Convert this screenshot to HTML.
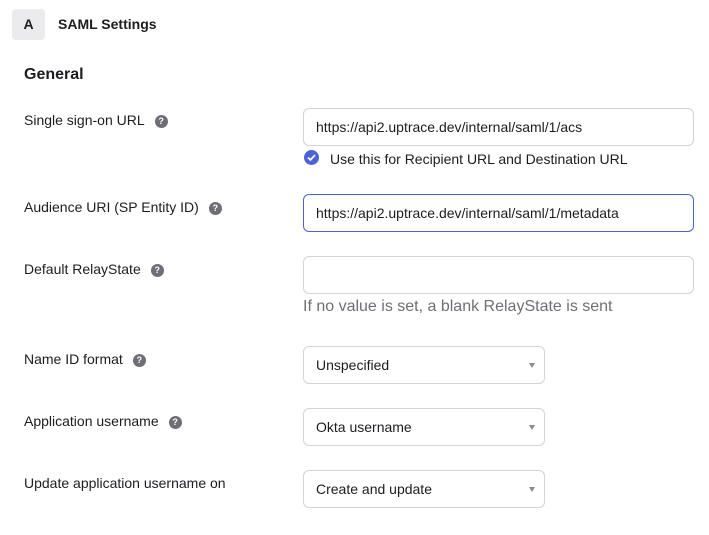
<!DOCTYPE html>
<html><head><style>
body{margin:0;width:709px;height:535px;background:#fff;font-family:"Liberation Sans",sans-serif;color:#1d1d21;position:relative;overflow:hidden}
.a{position:absolute}
.box{position:absolute;left:12px;top:9px;width:33px;height:31px;background:#ebebed;border-radius:4px;font-weight:bold;font-size:14px;text-align:center;line-height:31px}
.lbl{position:absolute;left:24px;font-size:14px;color:#1d1d21}
.q{display:inline-block;width:13px;height:13px;border-radius:50%;background:#6e6e78;color:#fff;font-size:9px;font-weight:bold;text-align:center;line-height:13px;margin-left:10px;vertical-align:1px}
.in{position:absolute;left:303px;height:36px;border:1px solid #d4d4d8;border-radius:6px;font-size:14px;line-height:36px;padding-left:12px;width:377px;color:#1d1d21}
.sel{position:absolute;left:303px;width:228px;height:36px;border:1px solid #d4d4d8;border-radius:6px;font-size:14px;line-height:36px;padding-left:12px}
.sel:after{content:"";position:absolute;right:9px;top:16px;border:3.5px solid transparent;border-top:5px solid #8a8a92}
</style></head><body>
<div class="box">A</div>
<div class="a" style="left:58px;top:16px;font-size:14px;font-weight:bold">SAML Settings</div>
<div class="a" style="left:24px;top:66px;font-size:16px;font-weight:bold">General</div>

<div class="lbl" style="top:112px">Single sign-on URL<span class="q">?</span></div>
<div class="in" style="top:108px">https://api2.uptrace.dev/internal/saml/1/acs</div>
<div class="a" style="left:304px;top:150px;width:15px;height:15px;border-radius:50%;background:#4d62d6"><svg width="15" height="15" viewBox="0 0 15 15"><path d="M4 7.6l2.4 2.3 4.6-4.8" stroke="#fff" stroke-width="1.8" fill="none"/></svg></div>
<div class="a" style="left:330px;top:151px;font-size:14px">Use this for Recipient URL and Destination URL</div>

<div class="lbl" style="top:199px">Audience URI (SP Entity ID)<span class="q">?</span></div>
<div class="in" style="top:194px;border-color:#4d62d6">https://api2.uptrace.dev/internal/saml/1/metadata</div>

<div class="lbl" style="top:261px">Default RelayState<span class="q">?</span></div>
<div class="in" style="top:256px"></div>
<div class="a" style="left:303px;top:298px;font-size:16px;color:#6e6e78">If no value is set, a blank RelayState is sent</div>

<div class="lbl" style="top:351px">Name ID format<span class="q">?</span></div>
<div class="sel" style="top:346px">Unspecified</div>
<div class="lbl" style="top:413px">Application username<span class="q">?</span></div>
<div class="sel" style="top:408px">Okta username</div>
<div class="lbl" style="top:475px">Update application username on</div>
<div class="sel" style="top:470px">Create and update</div>
</body></html>
